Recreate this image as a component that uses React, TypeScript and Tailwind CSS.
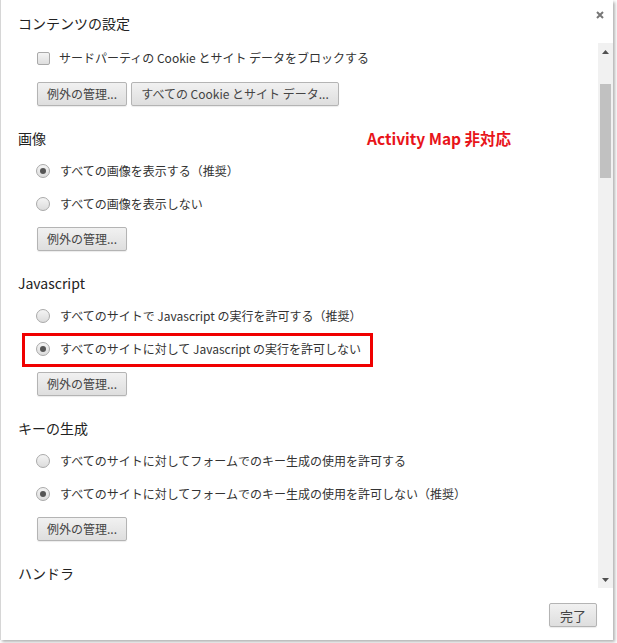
import React from 'react';

const Btn: React.FC<{ children: React.ReactNode; className?: string }> = ({ children, className = '' }) => (
  <button
    type="button"
    className={`h-[24px] px-[9px] border border-[#b4b4b4] rounded-[2px] bg-linear-to-b from-[#f1f1f1] to-[#dedede] text-[12px] leading-none text-[#444] shadow-[0_1px_1px_rgba(0,0,0,0.08)] ${className}`}
  >
    {children}
  </button>
);

const Radio: React.FC<{ checked?: boolean; label: string }> = ({ checked, label }) => (
  <div className="h-[33px] flex items-center pl-[18px] gap-[10px]">
    <span className="w-[14px] h-[14px] rounded-full border border-[#a9a9a9] bg-linear-to-b from-[#f4f4f4] to-[#dcdcdc] flex items-center justify-center shrink-0">
      {checked && <span className="w-[6px] h-[6px] rounded-full bg-[#555]" />}
    </span>
    <span className="text-[12px] leading-none text-[#333]">{label}</span>
  </div>
);

const Heading: React.FC<{ children: React.ReactNode }> = ({ children }) => (
  <div className="relative h-[32px] mt-[16px] flex items-center text-[14px] leading-none text-[#222]">{children}</div>
);

export default function App() {
  return (
    <div className="w-[617px] h-[643px] bg-white font-['Noto_Sans_CJK_JP','Noto_Sans',sans-serif]">
      <div className="w-[613px] h-[640px] flex flex-col bg-white border-l border-[#d6d6d6] shadow-[2px_2px_3px_rgba(0,0,0,0.3)]">
        {/* Header */}
        <div className="h-[43px] flex justify-between pl-[17px] pr-[9px]">
          <h1 className="pt-[13px] text-[14px] leading-[20px] text-[#222] font-normal">コンテンツの設定</h1>
          <svg width="8" height="8" viewBox="0 0 8 8" className="mt-[11px]">
            <path d="M1 1 L7 7 M7 1 L1 7" stroke="#777" strokeWidth="2" />
          </svg>
        </div>

        {/* Body */}
        <div className="h-[545px] flex">
          <div className="flex-1 overflow-hidden pl-[17px]">
            <div className="h-[30px] flex items-center pl-[19px] gap-[9px]">
              <span className="w-[13px] h-[13px] rounded-[2px] border border-[#a9a9a9] bg-linear-to-b from-[#f4f4f4] to-[#dedede] shrink-0" />
              <span className="text-[12px] leading-none text-[#333]">サードパーティの Cookie とサイト データをブロックする</span>
            </div>
            <div className="mt-[9px] ml-[19px] flex gap-[4px]">
              <Btn className="w-[90px]">例外の管理...</Btn>
              <Btn className="w-[208px]">すべての Cookie とサイト データ...</Btn>
            </div>

            <Heading>
              画像
              <span className="absolute left-[349px] top-[4px] text-[15.5px] leading-[24px] font-bold text-[#e8141a]">
                Activity Map 非対応
              </span>
            </Heading>
            <Radio checked label="すべての画像を表示する（推奨）" />
            <Radio label="すべての画像を表示しない" />
            <Btn className="w-[90px] mt-[7px] ml-[19px]">例外の管理...</Btn>

            <Heading>Javascript</Heading>
            <Radio label="すべてのサイトで Javascript の実行を許可する（推奨）" />
            <div className="relative">
              <Radio checked label="すべてのサイトに対して Javascript の実行を許可しない" />
              <div className="absolute left-[4px] top-[1px] w-[351px] h-[34px] border-[3px] border-[#f00000]" />
            </div>
            <Btn className="w-[90px] mt-[7px] ml-[19px]">例外の管理...</Btn>

            <Heading>キーの生成</Heading>
            <Radio label="すべてのサイトに対してフォームでのキー生成の使用を許可する" />
            <Radio checked label="すべてのサイトに対してフォームでのキー生成の使用を許可しない（推奨）" />
            <Btn className="w-[90px] mt-[7px] ml-[19px]">例外の管理...</Btn>

            <Heading>ハンドラ</Heading>
          </div>

          {/* Scrollbar */}
          <div className="w-[15px] bg-[#f1f1f1] flex flex-col items-center">
            <div className="h-[17px] flex items-center justify-center">
              <svg width="7" height="4" viewBox="0 0 7 4">
                <path d="M0 4 L3.5 0 L7 4 Z" fill="#505050" />
              </svg>
            </div>
            <div className="h-[24px]" />
            <div className="w-[11px] h-[94px] bg-[#c1c1c1]" />
            <div className="flex-1" />
            <div className="h-[17px] flex items-center justify-center">
              <svg width="7" height="4" viewBox="0 0 7 4">
                <path d="M0 0 L7 0 L3.5 4 Z" fill="#505050" />
              </svg>
            </div>
          </div>
        </div>

        {/* Footer */}
        <div className="flex-1 flex justify-end items-start pt-[15px] pr-[16px]">
          <Btn className="w-[48px] text-[13px]">完了</Btn>
        </div>
      </div>
    </div>
  );
}
